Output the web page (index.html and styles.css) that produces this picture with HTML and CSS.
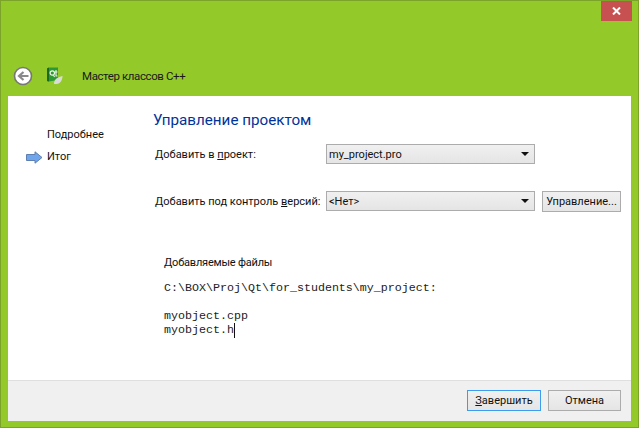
FILE: index.html
```html
<!DOCTYPE html>
<html lang="ru">
<head>
<meta charset="utf-8">
<title>Мастер классов C++</title>
<link rel="stylesheet" href="styles.css">
</head>
<body>
<div class="window">
  <div class="titlebar"><div class="close"><svg width="9" height="8" viewBox="0 0 9 8"><path d="M1 0.5 L8 7.5 M8 0.5 L1 7.5" stroke="#fff" stroke-width="2"/></svg></div></div>
  <div class="header">
    <svg class="back" width="20" height="20" viewBox="0 0 20 20"><circle cx="10" cy="10" r="8.5" fill="#fff" stroke="#777" stroke-width="1.6"/><path d="M15.5 10 H7 M10.5 6 L6 10 L10.5 14" fill="none" stroke="#8a8a8a" stroke-width="2.2"/></svg>
    <svg class="qt" width="17" height="18" viewBox="0 0 17 18"><path d="M1 1.5 L3 0.5 H12 V13 L3 14.5 L1 14 Z" fill="#2c9a30"/><path d="M1 1.5 L3 0.5 V14.5 L1 14 Z" fill="#176a1e"/><circle cx="6.3" cy="6" r="2.2" fill="none" stroke="#eef6e6" stroke-width="1.2"/><path d="M7.5 8 L8.5 10 M10 3 V9 H11.5 M9 5 H11.5" fill="none" stroke="#eef6e6" stroke-width="1.1"/><path d="M8 17 C8 12 12 10 16.5 9 C16.5 13 14 17.5 10 17 Z" fill="#d9dcd6"/></svg>
    <span class="wizard-title">Мастер классов C++</span>
  </div>
  <div class="panel">
    <div class="main">
      <nav class="steps">
        <div class="step">Подробнее</div>
        <div class="step current"><svg class="arrow" width="17" height="13" viewBox="0 0 17 13"><path d="M0.5 3.5 H9 V0.8 L16 6.5 L9 12.2 V9.5 H0.5 Z" fill="#6fa5ea" stroke="#5f7fb0"/></svg>Итог</div>
      </nav>
      <div class="page">
        <h1>Управление проектом</h1>
        <div class="row row-project">
          <label class="label">Добавить в <u>п</u>роект:</label>
          <div class="combo"><span>my_project.pro</span><i class="caret"></i></div>
        </div>
        <div class="row row-vcs">
          <label class="label">Добавить под контроль <u>в</u>ерсий:</label>
          <div class="combo"><span>&lt;Нет&gt;</span><i class="caret"></i></div>
          <button class="btn btn-manage">Управление...</button>
        </div>
        <div class="files">
          <div class="files-title">Добавляемые файлы</div>
          <pre class="mono">C:\BOX\Proj\Qt\for_students\my_project:

myobject.cpp
myobject.h<span class="cursor"></span></pre>
        </div>
      </div>
    </div>
    <div class="footer">
      <button class="btn btn-finish"><u>З</u>авершить</button>
      <button class="btn btn-cancel">Отмена</button>
    </div>
  </div>
</div>
</body>
</html>
```
FILE: styles.css
```css
* { box-sizing: border-box; }
html, body { margin: 0; padding: 0; }
body { width: 639px; height: 428px; overflow: hidden; font-family: Roboto, sans-serif; font-size: 11px; color: #111; }
.window { width: 639px; height: 428px; background: #94c92a; border: 1px solid #7ba32a; display: flex; flex-direction: column; padding: 0 7px 6px 7px; }
.titlebar { height: 20px; display: flex; justify-content: flex-end; flex: none; margin-right: -1px; }
.close { width: 31px; height: 20px; background: #c75050; display: flex; align-items: center; justify-content: center; }
.header { height: 75px; flex: none; display: flex; align-items: center; padding-top: 35px; }
.back { margin-left: 5px; }
.qt { margin-left: 13px; margin-top: -1px; }
.wizard-title { margin-left: 19px; font-size: 11.5px; letter-spacing: -0.4px; color: #1a1a1a; }
.panel { flex: 1; background: #fff; display: flex; flex-direction: column; min-height: 0; }
.main { flex: 1; display: flex; min-height: 0; }
.steps { width: 145px; flex: none; padding-top: 31px; }
.step { height: 22px; padding-left: 39px; line-height: 16px; position: relative; }
.arrow { position: absolute; left: 18px; top: 2px; }
.page { flex: 1; min-width: 0; }
h1 { margin: 14px 0 0 0; font-weight: 400; font-size: 15.2px; line-height: 20px; color: #003399; }
.row { display: flex; align-items: center; height: 22px; padding-left: 2px; }
.row-project { margin-top: 13px; }
.row-vcs { margin-top: 25px; }
.label { white-space: nowrap; width: 171px; flex: none; }
.combo { width: 209px; height: 20px; flex: none; border: 1px solid #acacac; background: linear-gradient(#f0f0f0, #e5e5e5); display: flex; align-items: center; padding-left: 2px; position: relative; }
.caret { position: absolute; right: 5px; top: 7px; width: 0; height: 0; border-left: 4px solid transparent; border-right: 4px solid transparent; border-top: 4px solid #111; }
.btn { font: inherit; color: #111; height: 21px; border: 1px solid #acacac; background: linear-gradient(#f0f0f0, #e5e5e5); padding: 0; }
.btn-manage { width: 79px; margin-left: 7px; flex: none; }
.files { margin-top: 43px; padding-left: 11px; }
.files-title { line-height: 16px; letter-spacing: -0.2px; }
.mono { margin: 10px 0 0 0; font-family: "Liberation Mono", monospace; font-size: 11.67px; line-height: 14px; color: #222; }
.cursor { display: inline-block; width: 1px; height: 15px; background: #111; vertical-align: top; }
.footer { height: 41px; flex: none; background: #f0f0f0; border-top: 1px solid #dfdfdf; display: flex; justify-content: flex-end; padding: 9px 10px 0 0; gap: 7px; }
.btn-finish { width: 74px; height: 21px; border-color: #3c9cf0; }
.btn-cancel { width: 73px; height: 21px; }
```
